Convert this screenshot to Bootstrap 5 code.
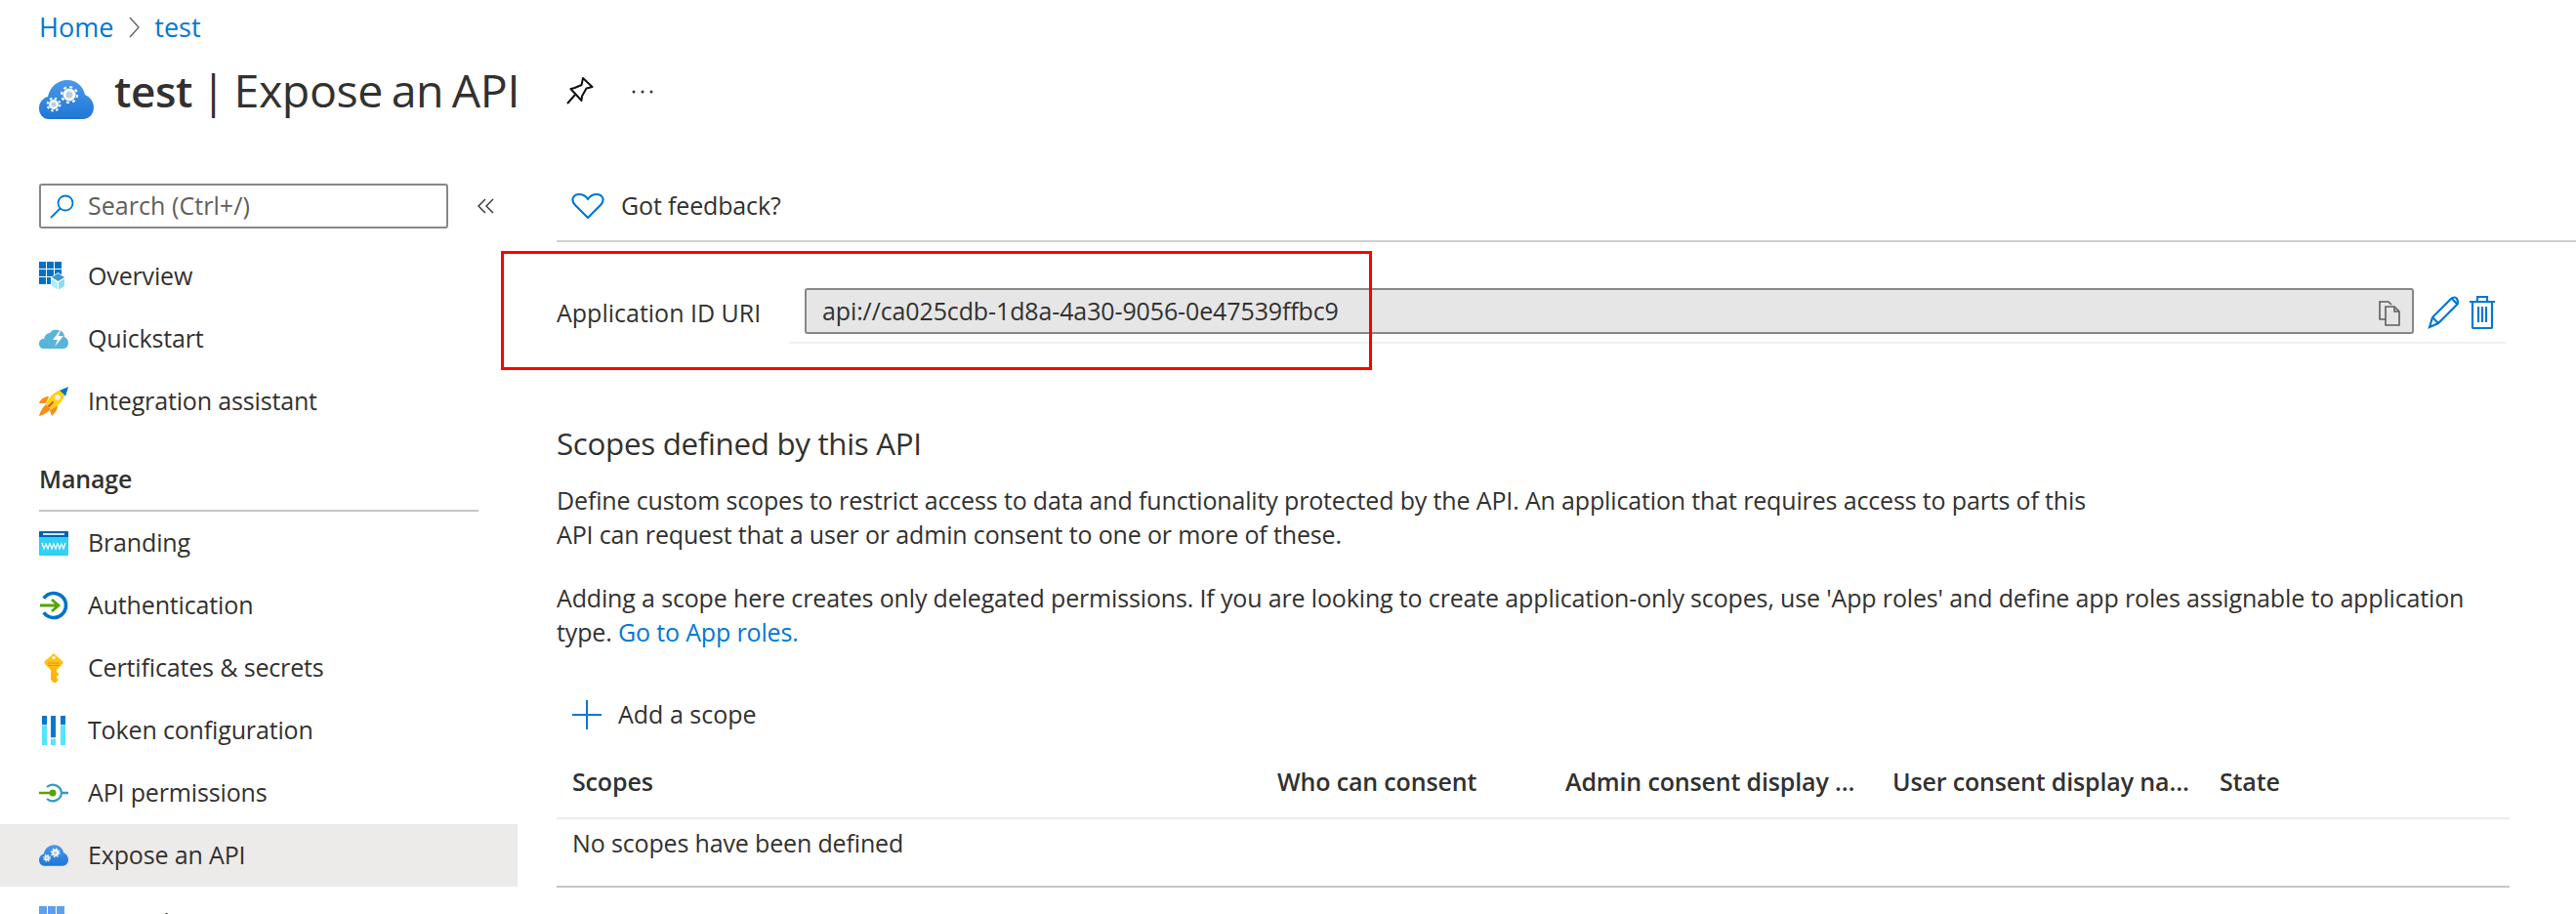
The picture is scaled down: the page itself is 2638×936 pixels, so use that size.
<!DOCTYPE html>
<html lang="en">
<head>
<meta charset="utf-8">
<title>test | Expose an API</title>
<link rel="stylesheet" href="https://cdn.jsdelivr.net/npm/bootstrap@5.3.0/dist/css/bootstrap.min.css">
<style>
html,body{height:936px;overflow:hidden;background:#fff}
body{font-family:"Open Sans","Liberation Sans",sans-serif;font-size:25px;color:#323130;letter-spacing:-.15px}
a{color:#0078d4;text-decoration:none}
.crumbs{height:56px;padding:0 0 0 40px;margin:0;font-size:27px;letter-spacing:0}
.crumb-sep{margin:0 14px 0 15px}
.title-row{height:76px;padding-left:40px}
.title-row h1{font-size:46.500px;font-weight:400;margin:0 0 0 21px;letter-spacing:-.4px;line-height:76px;position:relative;top:-2px;word-spacing:-3px}
.title-row b{font-weight:600;font-size:44px}
.pin-btn{margin-left:48px;margin-bottom:2px}
.more-btn{margin-left:38px}
.side{width:530px;flex:none}
.search-box{margin-left:40px;width:419px;height:46px;border:2px solid #8a8886;border-radius:3px;padding:0 0 0 9px;color:#605e5c;gap:14px;letter-spacing:.05px}
.collapse-btn{margin-left:30px}
.nav-entry{height:64px;padding-left:40px;gap:20px;color:#323130}
.nav-entry svg{width:30px;height:30px;flex:none}
.nav-entry.is-on{background:#edebe9}
.entry-cut span{margin-top:9px}
.group-head{margin:0 40px;height:81px;padding-top:29px;font-weight:600;border-bottom:2px solid #c8c6c4;line-height:36px}
.top-rule{height:60px;border-bottom:2px solid #d2d0ce;margin-left:40px;padding-left:15px;gap:17px;padding-bottom:12px}
.main-col{flex:1 1 auto;min-width:0}
.pane{margin:0 68px 0 40px}
.uri-row{padding-top:47px}
.uri-label{width:254px;flex:none;padding-top:7px;letter-spacing:0}
.uri-field{width:1648px;height:47px;border:2px solid #8a8886;border-radius:3px;background:#e6e6e6;padding:0 12px 0 16px;color:#323130;font-size:25px;letter-spacing:-.12px;flex:none}
.uri-field svg{margin-top:4px}
.act-icon{margin-top:8px;flex:none}
.uri-under{height:2px;background:#f0f0f0;margin:8px 3px 0 238px}
.section-title{font-size:31.300px;font-weight:400;margin:82px 0 0;line-height:40px;letter-spacing:-.3px}
.copy-text{line-height:35px;margin:21px 0 0}
.copy-text+.copy-text{margin-top:30px}
.add-btn{gap:17px;padding-left:16px;margin-top:47px;height:40px;letter-spacing:0}
.scope-table{table-layout:fixed;width:100%;margin:12px 0 0;--bs-table-color:#323130;--bs-table-border-color:#edebe9}
.scope-table th{font-weight:600;border-bottom:2px solid #edebe9;height:74px;padding:0 22px 0 16px;vertical-align:middle}
.scope-table th.tight-end{padding-right:10px}
.scope-table td{height:70px;padding:0 16px 18px;border-bottom:2px solid #c8c6c4;vertical-align:middle}
.red-mark{position:absolute;left:513px;top:257px;width:892px;height:122px;border:3px solid #f00;pointer-events:none}
.shell{position:relative}
</style>
</head>
<body>
<svg width="0" height="0" class="d-block position-absolute">
<defs>
<linearGradient id="cg" x1="0" y1="0" x2="0" y2="1"><stop offset="0" stop-color="#4b98ea"/><stop offset="1" stop-color="#1e77d7"/></linearGradient>
<linearGradient id="kg" x1="0" y1="0" x2="0" y2="1"><stop offset="0" stop-color="#ffc91f"/><stop offset="1" stop-color="#ffae00"/></linearGradient>
<symbol id="cloudgear" viewBox="0 0 56 40">
<path fill="url(#cg)" d="M10 40C4 40 0 35 0 29c0-6 4-11 9-12C11 7 19 0 29 0c9 0 16 6 18 15 5 2 9 7 9 13 0 7-5 12-11 12z"/>
<circle cx="31" cy="15" r="5" fill="#b9cfe9" stroke="#fff" stroke-width="3"/>
<circle cx="31" cy="15" r="8" fill="none" stroke="#fff" stroke-width="2.200" stroke-dasharray="3 3.280"/>
<circle cx="15" cy="25" r="3.800" fill="#b9cfe9" stroke="#fff" stroke-width="2.400"/>
<circle cx="15" cy="25" r="6.400" fill="none" stroke="#fff" stroke-width="2" stroke-dasharray="2.500 2.530"/>
</symbol>
</defs>
</svg>
<div class="shell">
<nav aria-label="breadcrumb" class="crumbs d-flex align-items-center">
<a href="#">Home</a>
<svg class="crumb-sep" width="13" height="26" viewBox="0 0 13 26" fill="none" stroke="#605e5c" stroke-width="1.300"><path d="M2 3l9 10-9 10"/></svg>
<a href="#">test</a>
</nav>
<div class="title-row d-flex align-items-center">
<svg width="56" height="40" class="mt-3"><use href="#cloudgear"/></svg>
<h1><b>test</b> | Expose an API</h1>
<svg class="pin-btn" width="28" height="28" viewBox="0 0 28 28" fill="none" stroke="#111" stroke-width="2" stroke-linejoin="round"><path d="M17 1l9.500 9-6 1.500-4.500 8-.5 4.500-11-12 4-1 7-3z"/><path d="M9 18l-8 9"/></svg>
<svg class="more-btn" width="24" height="6" viewBox="0 0 24 6" fill="#333"><circle cx="3" cy="3" r="1.500"/><circle cx="12" cy="3" r="1.500"/><circle cx="21" cy="3" r="1.500"/></svg>
</div>
<div class="d-flex" style="margin-top:56px">
<aside class="side">
<div class="d-flex align-items-center">
<div class="search-box d-flex align-items-center">
<svg width="25" height="25" viewBox="0 0 25 25" fill="none" stroke="#0078d4" stroke-width="1.800"><circle cx="16" cy="9" r="7.500"/><path d="M10.500 14.500L1 24"/></svg>
<span>Search (Ctrl+/)</span>
</div>
<svg class="collapse-btn" width="18" height="18" viewBox="0 0 18 18" fill="none" stroke="#323130" stroke-width="1.400"><path d="M8 2L1 9l7 7M16 2L9 9l7 7"/></svg>
</div>
<div class="nav flex-column" style="margin-top:17px">
<a class="nav-entry d-flex align-items-center" href="#"><svg viewBox="0 0 30 30"><path fill="#0072c6" d="M0 0h7v7H0zM8 0h7v7H8zM16 0h7v7h-7zM0 8h7v7H0zM8 8h7v7H8zM16 8h7v7h-7zM0 16h7v7H0zM8 16h7v7H8zM16 16h7v7h-7z"/><path fill="#fff" d="M12 16l7.500-5 7.500 5v9l-7.500 5-7.500-5z"/><path fill="#3c96cf" d="M19.500 12l6.500 4-6.500 4-6.500-4z"/><path fill="#b3ecfa" d="M13 17.500l6 3.500v7.500l-6-3.500z"/><path fill="#8cdcf2" d="M20 21l6-3.500V25l-6 3.500z"/></svg><span>Overview</span></a>
<a class="nav-entry d-flex align-items-center" href="#"><svg viewBox="0 0 30 30"><path fill="#59b4d9" d="M5 25c-3 0-5-2-5-5s2-5 5-5c1-4 3-6 6-6 2-3 5-4 8-3 4 0 7 3 7 7 2 1 4 3 4 6s-2 6-5 6z"/><path fill="#fff" d="M23 4l-9 12h5l-3 7 9-11h-5z"/></svg><span>Quickstart</span></a>
<a class="nav-entry d-flex align-items-center" href="#"><svg viewBox="0 0 30 30"><path fill="#f78d1e" d="M10 10c-4 0-8 2-10 7h7zM19 19c0 4-2 8-6 11l-2-6z"/><path fill="#f78d1e" d="M7 18l5 5c-3 3-7 6-12 7 1-5 4-9 7-12z"/><path fill="#fcd116" d="M23 3C16 5 10 10 7 18l5 5c8-3 13-9 15-16z"/><path fill="#0072c6" d="M30 0l-9 4c2 1 5 4 6 6z"/><circle cx="19" cy="11" r="2.800" fill="#eef0f2"/><path d="M9.500 20.500l5-5" stroke="#d9541e" stroke-width="2"/></svg><span>Integration assistant</span></a>
<div class="group-head">Manage</div>
<a class="nav-entry d-flex align-items-center" href="#"><svg viewBox="0 0 30 30"><rect y="3" width="30" height="25" rx="1" fill="#32d0f5"/><path fill="#0063b1" d="M1 3h28a1 1 0 011 1v5H0V4a1 1 0 011-1z"/><path fill="#cfe7f6" d="M4 5h22v2H4z"/><path d="M3 15l2 6 2-5 2 5 2-6M11 15l2 6 2-5 2 5 2-6M19 15l2 6 2-5 2 5 2-6" fill="none" stroke="#fff" stroke-width="1.200"/></svg><span>Branding</span></a>
<a class="nav-entry d-flex align-items-center" href="#"><svg viewBox="0 0 30 30" fill="none"><path d="M4.800 7.800a12.500 12.500 0 1 1 0 14.400" stroke="#0072c6" stroke-width="3.600"/><path d="M1 15h18M13 9l7 6-7 6" stroke="#57a300" stroke-width="2.800"/></svg><span>Authentication</span></a>
<a class="nav-entry d-flex align-items-center" href="#"><svg viewBox="0 0 30 30"><path fill="url(#kg)" d="M15 0l9 8q1.500 1.500 0 3l-6 6v2l2 1.500v2l-2 1v2l2 1.500-3 3h-2l-3-3V17L6 11q-1.500-1.500 0-3z"/><circle cx="15" cy="4.500" r="1.600" fill="#fff"/><path d="M9 10h12M9 12.500h12" stroke="#ee9014" stroke-width="1"/></svg><span>Certificates &amp; secrets</span></a>
<a class="nav-entry d-flex align-items-center" href="#"><svg viewBox="0 0 30 30"><path fill="#50e6ff" d="M3 0h5v30H3zM12 24h5v6h-5zM22 10h5v20h-5z"/><path fill="#0078d4" d="M3 0h5v9H3zM12 0h5v22h-5zM22 0h5v9h-5z"/><path fill="#c8d6df" d="M3 9h5v1.500H3zM12 22h5v1.500h-5zM22 9h5v1.500h-5z"/></svg><span>Token configuration</span></a>
<a class="nav-entry d-flex align-items-center" href="#"><svg viewBox="0 0 30 30" fill="none"><path d="M8 9a9 9 0 0 1 15 6 9 9 0 0 1-15 6M23 15h7" stroke="#3999c6" stroke-width="2.300"/><path d="M0 15h12" stroke="#57a300" stroke-width="2.500"/><circle cx="14" cy="15" r="3.500" fill="#57a300"/></svg><span>API permissions</span></a>
<a class="nav-entry is-on d-flex align-items-center" href="#"><svg viewBox="0 0 30 30"><use href="#cloudgear"/></svg><span>Expose an API</span></a>
<a class="nav-entry entry-cut d-flex align-items-center" href="#"><svg viewBox="0 0 30 30"><path fill="#5ea0ef" d="M0 3h8v8H0zM9 3h8v8H9zM18 3h8v8h-8zM0 12h8v8H0zM9 12h8v8H9z"/></svg><span>App roles</span></a>
</div>
</aside>
<main class="main-col">
<div class="top-rule d-flex align-items-center">
<svg width="34" height="28" viewBox="0 0 34 28" fill="none" stroke="#0078d4" stroke-width="2.200" stroke-linejoin="round"><path d="M17 26L4 13C-1 8 2 2 8 2c4 0 7 2 9 5 2-3 5-5 9-5 6 0 9 6 4 11z"/></svg>
<span>Got feedback?</span>
</div>
<div class="pane">
<div class="uri-row d-flex align-items-start">
<div class="uri-label">Application ID URI</div>
<div class="uri-field d-flex align-items-center justify-content-between">
<span>api://ca025cdb-1d8a-4a30-9056-0e47539ffbc9</span>
<svg width="22" height="26" viewBox="0 0 22 26" fill="none" stroke="#605e5c" stroke-width="1.600"><path d="M7 19H1V1h9l3 3"/><path d="M7 6h9l5 5v14H7z"/><path d="M16 6v5h5"/></svg>
</div>
<svg class="act-icon" style="margin-left:14px" width="34" height="34" viewBox="0 0 34 34" fill="none" stroke="#0078d4" stroke-width="2.200"><path d="M2 32l3-10L24 3c2-2 5-2 6 0s2 4 0 6L11 28z"/><path d="M5 22l6 6M25 3l6 6"/></svg>
<svg class="act-icon ms-2" width="28" height="34" viewBox="0 0 28 34" fill="none" stroke="#0078d4" stroke-width="2.200"><path d="M1 6h26M9 5V1h10v4M4 6v26a1 1 0 0 0 1 1h18a1 1 0 0 0 1-1V6"/><path d="M10 11v16M14 11v16M18 11v16"/></svg>
</div>
<div class="uri-under"></div>
<h2 class="section-title">Scopes defined by this API</h2>
<p class="copy-text">Define custom scopes to restrict access to data and functionality protected by the API. An application that requires access to parts of this<br>API can request that a user or admin consent to one or more of these.</p>
<p class="copy-text">Adding a scope here creates only delegated permissions. If you are looking to create application-only scopes, use 'App roles' and define app roles assignable to application<br>type. <a href="#">Go to App roles.</a></p>
<div class="add-btn d-flex align-items-center">
<svg width="30" height="30" viewBox="0 0 30 30" stroke="#0078d4" stroke-width="2"><path d="M15 0v30M0 15h30"/></svg>
<span>Add a scope</span>
</div>
<table class="table scope-table">
<colgroup><col style="width:722px"><col style="width:295px"><col style="width:335px"><col style="width:335px"><col></colgroup>
<thead><tr><th>Scopes</th><th class="text-truncate">Who can consent</th><th class="text-truncate">Admin consent display name</th><th class="text-truncate tight-end">User consent display name</th><th>State</th></tr></thead>
<tbody><tr><td colspan="5">No scopes have been defined</td></tr></tbody>
</table>
</div>
</main>
</div>
<div class="red-mark"></div>
</div>
</body>
</html>
